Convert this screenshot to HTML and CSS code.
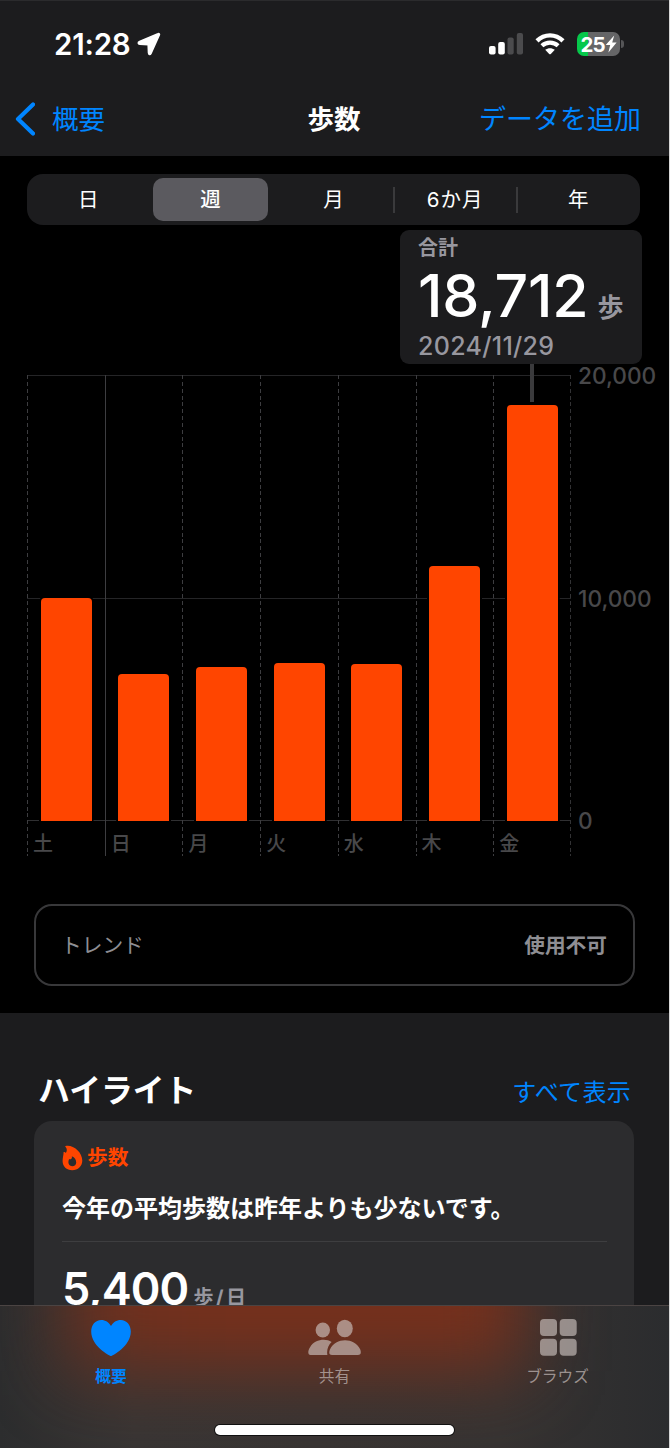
FILE: index.html
```
<!DOCTYPE html>
<html lang="ja">
<head>
    <meta charset="UTF-8">
    <title>歩数</title>
    <link rel="stylesheet" href="styles.css">
</head>
<body>
    <div class="phone">
        <header class="header">
            <div class="status-bar">
                <div class="status-left">
                    <span class="time">21:28</span>
                    <svg class="location" width="24" height="24" viewBox="0 0 24 24">
                        <path d="M21 1.8 2.6 9.6C.6 10.5 1 12.2 2.8 12.3L11.2 12.6 11.5 20.8C11.6 22.8 13.2 23 14 21.3L22.3 3C22.8 1.9 22 1.3 21 1.8Z" fill="#fff" stroke="#fff" stroke-width="1.6" stroke-linejoin="round"/>
                    </svg>
                </div>
                <div class="status-right">
                    <svg class="signal" width="35" height="22" viewBox="0 0 35 22">
                        <rect x="0" y="13" width="6.6" height="8.5" rx="2" fill="#fff"/>
                        <rect x="9.2" y="9" width="6.6" height="12.5" rx="2" fill="#fff"/>
                        <rect x="18.5" y="4.5" width="6.2" height="17" rx="2" fill="#4b4b4d"/>
                        <rect x="27.8" y="0" width="6.2" height="21.5" rx="2" fill="#4b4b4d"/>
                    </svg>
                    <svg class="wifi" width="30" height="22" viewBox="0 0 30 22">
                        <path d="M2 7.8C9.4.6 20.6.6 28 7.8" fill="none" stroke="#fff" stroke-width="4.4"/>
                        <path d="M6.9 12.8C11.5 8.6 18.5 8.6 23.1 12.8" fill="none" stroke="#fff" stroke-width="4.2"/>
                        <path d="M10.2 16.8C13 14.7 17 14.7 19.8 16.8L15.8 20.9Q15 21.7 14.2 20.9Z" fill="#fff"/>
                    </svg>
                    <div class="battery">
                        <span>25</span>
                        <svg width="12" height="18" viewBox="0 0 12 18">
                            <path d="M9.2.5.7 10H5.2L3.4 17.5 11.6 7.6H7.2Z" fill="#fff"/>
                        </svg>
                    </div>
                    <i class="battery-cap"></i>
                </div>
            </div>
            <nav class="nav">
                <a class="back">
                    <svg width="21" height="34" viewBox="0 0 21 34">
                        <path d="M19 2.5 4 17 19 31.5" fill="none" stroke="#0085ff" stroke-width="4.2" stroke-linecap="round" stroke-linejoin="round"/>
                    </svg>
                    <span>概要</span>
                </a>
                <h1>歩数</h1>
                <a class="add">データを追加</a>
            </nav>
        </header>

        <main class="chart-section">
            <div class="segments">
                <div class="segment">日</div>
                <div class="segment selected">週</div>
                <div class="segment">月</div>
                <div class="segment line half-year">6か月</div>
                <div class="segment line">年</div>
            </div>

            <div class="summary">
                <div class="summary-label">合計</div>
                <div class="summary-value"><b>18,712</b><span>歩</span></div>
                <div class="summary-date">2024/11/29</div>
            </div>

            <div class="chart">
                <div class="plot">
                    <div class="day"><div class="bar" style="height: 223.5px"></div><span>土</span></div>
                    <div class="day week-start"><div class="bar" style="height: 147px"></div><span>日</span></div>
                    <div class="day"><div class="bar" style="height: 154px"></div><span>月</span></div>
                    <div class="day"><div class="bar" style="height: 158.5px"></div><span>火</span></div>
                    <div class="day"><div class="bar" style="height: 157px"></div><span>水</span></div>
                    <div class="day"><div class="bar" style="height: 255.5px"></div><span>木</span></div>
                    <div class="day picked"><div class="bar" style="height: 416px"></div><span>金</span></div>
                </div>
                <div class="axis">
                    <span>20,000</span>
                    <span>10,000</span>
                    <span>0</span>
                </div>
            </div>

            <div class="trend">
                <span>トレンド</span>
                <b>使用不可</b>
            </div>
        </main>

        <section class="highlights">
            <div class="highlights-head">
                <h2>ハイライト</h2>
                <a>すべて表示</a>
            </div>
            <div class="card">
                <div class="card-type">
                    <svg width="21" height="26" viewBox="0 0 21 26">
                        <path fill-rule="evenodd" d="M3.6.9C10.5-.8 20.3 6.5 20.3 15.6 20.3 21.4 16 25.3 10.2 25.3 4.5 25.3.6 21.6.6 16.1.6 12.3 1.8 9.6 1.5 7.3 2.2 6.5 3.3 7 3.8 8 5.3 5.8 5.1 3.7 3.4 1.8 3 1.3 3.1 1 3.6.9ZM9.8 11.2C10.6 14.2 8 14.8 7.2 14 6.4 15.5 6.2 17 6.6 18.5 7.2 20.3 8.6 21.2 10.3 21.2 12.6 21.2 14.2 19.7 14.2 17.4 14.2 14.5 12.7 12.4 9.8 11.2Z" fill="#ff4500"/>
                    </svg>
                    <span>歩数</span>
                </div>
                <p>今年の平均歩数は昨年よりも少ないです。</p>
                <div class="average"><b>5,400</b><span>歩/日</span></div>
            </div>
        </section>

        <footer class="tab-bar">
            <div class="tabs">
                <div class="tab active">
                    <svg width="54" height="40" viewBox="0 0 54 40">
                        <path d="M27 38C25.5 38 7.2 28.2 7.2 13.5 7.2 7 11.4 2 17.2 2 21.5 2 24.9 4.3 27 8 29.1 4.3 32.5 2 36.8 2 42.6 2 46.8 7 46.8 13.5 46.8 28.2 28.5 38 27 38Z"/>
                    </svg>
                    <span>概要</span>
                </div>
                <div class="tab">
                    <svg width="54" height="40" viewBox="0 0 54 40">
                        <ellipse cx="14.8" cy="12" rx="7.2" ry="7.5"/>
                        <path d="M2.5 37C-.6 37-.2 32.5 2.2 29 6.3 21.6 17.4 20 23.6 23.9 20.4 27 18.4 31.5 19.4 37Z"/>
                        <ellipse cx="36.8" cy="10.5" rx="8" ry="8.7"/>
                        <path d="M24 37C20.8 37 20.8 34 22.2 31 27.5 19.3 46.5 19.3 52 31 53.4 34 53.2 37 50 37Z"/>
                    </svg>
                    <span>共有</span>
                </div>
                <div class="tab">
                    <svg width="54" height="40" viewBox="0 0 54 40">
                        <rect x="9" y="1" width="17" height="17" rx="4"/>
                        <rect x="28.7" y="1" width="17" height="17" rx="4"/>
                        <rect x="9" y="20.8" width="17" height="17" rx="4"/>
                        <rect x="28.7" y="20.8" width="17" height="17" rx="4"/>
                    </svg>
                    <span>ブラウズ</span>
                </div>
            </div>
            <div class="home-indicator"></div>
        </footer>
    </div>
</body>
</html>
```
FILE: styles.css
```
* {
    box-sizing: border-box;
}

body {
    margin: 0;
    background: #000;
    font-family: Inter, "Noto Sans CJK JP", sans-serif;
    color: #fff;
}

h1, h2, p {
    margin: 0;
}

svg {
    display: block;
    flex: none;
}

.phone {
    position: relative;
    width: 670px;
    height: 1448px;
    overflow: hidden;
    border-right: 1px solid #d8d8d8;
    background: #1c1c1e;
}

/* header */
.header {
    height: 156px;
    border-top: 1px solid #2b2b2d;
    background: #1c1c1e;
}

.status-bar {
    display: flex;
    justify-content: space-between;
    height: 80px;
    padding: 7px 45px 0 54px;
}

.status-left,
.status-right {
    display: flex;
    align-items: center;
    height: 72px;
}

.time {
    font-size: 29.5px;
    font-weight: 600;
    letter-spacing: -0.2px;
}

.location {
    margin-left: 6px;
}

.wifi {
    margin-left: 11px;
}

.battery {
    display: flex;
    align-items: center;
    justify-content: center;
    width: 43px;
    height: 24px;
    margin-left: 12px;
    border-radius: 7px;
    background: linear-gradient(to right, #06c84b 11px, #656567 11px);
    font-size: 20.5px;
    font-weight: 700;
    letter-spacing: -1px;
}

.battery-cap {
    width: 3px;
    height: 8px;
    margin-left: 1px;
    border-radius: 0 4px 4px 0;
    background: #555557;
}

.nav {
    display: grid;
    grid-template-columns: 1fr auto 1fr;
    align-items: center;
    height: 75px;
    padding: 0 28px 0 14px;
    font-size: 26.5px;
    line-height: 40px;
}

.nav a {
    color: #0085ff;
}

.nav h1 {
    margin-left: 13px;
    font-size: 26.5px;
    font-weight: 700;
}

.back {
    display: flex;
    align-items: center;
    gap: 17px;
}

.add {
    justify-self: end;
    padding-top: 2px;
    font-size: 27px;
}

/* chart */
.chart-section {
    height: 857px;
    padding-top: 18px;
    background: #000;
}

.segments {
    display: grid;
    grid-template-columns: repeat(5, 1fr);
    width: 613px;
    height: 51px;
    margin-left: 27px;
    padding: 4px 0;
    border-radius: 16px;
    background: #1c1c1e;
    font-size: 20.5px;
    line-height: 44px;
    text-align: center;
}

.segment.selected {
    height: 43px;
    margin: 0 4px 0 3px;
    border-radius: 10px;
    background: #5b5a5f;
    font-weight: 500;
}

.segment.line {
    margin-left: -1px;
    background: linear-gradient(#3a3a3c, #3a3a3c) no-repeat left center / 2px 26px;
}

.segment.half-year {
    margin-left: -2px;
    letter-spacing: 1px;
}

.summary {
    width: 242px;
    height: 134px;
    margin: 5px 0 0 400px;
    padding: 4px 18px;
    border-radius: 9px;
    background: #1c1c1e;
    color: #98979f;
    font-weight: 500;
}

.summary-label {
    font-size: 20px;
    font-weight: 700;
    line-height: 28px;
}

.summary-value {
    display: flex;
    align-items: baseline;
    height: 70px;
    line-height: 68px;
    white-space: nowrap;
}

.summary-value b {
    color: #fff;
    font-size: 59px;
    font-weight: 500;
    letter-spacing: -0.2px;
}

.summary-value span {
    margin-left: 9px;
    font-size: 26px;
    font-weight: 700;
}

.summary-date {
    font-size: 25px;
    letter-spacing: 0.3px;
    line-height: 28px;
}

.chart {
    display: flex;
    height: 481px;
    margin: 11px 0 0 27px;
}

.plot {
    display: grid;
    grid-template-columns: repeat(7, 1fr);
    width: 544px;
    background:
        repeating-linear-gradient(to bottom, #323234 0 4px, transparent 4px 6.85px) no-repeat right top / 1px 100%,
        linear-gradient(#252527, #252527) no-repeat 0 0 / 100% 1px,
        linear-gradient(#252527, #252527) no-repeat 0 223px / 100% 1px,
        linear-gradient(#303032, #303032) no-repeat 0 445px / 100% 1px;
}

.day {
    position: relative;
    display: flex;
    flex-direction: column;
    justify-content: flex-end;
    background: repeating-linear-gradient(to bottom, #3d3d40 0 4px, transparent 4px 6.85px) no-repeat left top / 1px 100%;
}

.day.week-start {
    background: linear-gradient(#3d3d40, #3d3d40) no-repeat left top / 1px 100%;
}

.bar {
    width: 51px;
    margin-left: 13.5px;
    border-radius: 4px 4px 0 0;
    background: #ff4500;
    box-shadow: 0 0 0 2px #000;
    clip-path: inset(-2px -2px 0 -2px);
}

.day span {
    height: 35px;
    padding-left: 6px;
    color: #48484a;
    font-size: 20px;
    font-weight: 500;
    line-height: 47px;
}

/* line from the summary box to the picked bar */
.day.picked::before {
    content: "";
    position: absolute;
    top: -11px;
    left: 37px;
    width: 4px;
    height: 38px;
    background: #3a3a3c;
}

.axis {
    display: flex;
    flex-direction: column;
    justify-content: space-between;
    height: 473px;
    margin: -13px 0 0 7px;
    color: #48484a;
    font-size: 22.7px;
    font-weight: 500;
    line-height: 28px;
}

.trend {
    display: flex;
    align-items: center;
    justify-content: space-between;
    width: 601px;
    height: 82px;
    margin: 48px 0 0 34px;
    padding: 0 26px 2px 25px;
    border: 2px solid #38383a;
    border-radius: 18px;
    color: #8e8e93;
    font-size: 20.7px;
}

.trend b {
    font-weight: 700;
}

/* highlights */
.highlights {
    padding: 52px 35px 0 34px;
}

.highlights-head {
    display: flex;
    align-items: center;
    justify-content: space-between;
    height: 56px;
    padding: 0 3px 11px 4px;
}

.highlights-head h2 {
    font-size: 31.8px;
    font-weight: 700;
}

.highlights-head a {
    padding-top: 6px;
    color: #0085ff;
    font-size: 24px;
    letter-spacing: 0.3px;
}

.card {
    height: 260px;
    padding: 19px 27px 0 28px;
    border-radius: 18px;
    background: #2c2c2e;
}

.card-type {
    display: flex;
    align-items: center;
    gap: 4px;
    height: 36px;
    color: #ff4500;
    font-size: 20.7px;
    font-weight: 700;
    line-height: 36px;
}

.card p {
    height: 66px;
    border-bottom: 1px solid #3e3e40;
    font-size: 24px;
    font-weight: 700;
    line-height: 65px;
}

.average {
    display: flex;
    align-items: baseline;
    height: 60px;
    margin-top: 17px;
    line-height: 60px;
}

.average b {
    font-size: 45px;
    font-weight: 600;
    letter-spacing: -0.9px;
}

.average span {
    margin-left: 5px;
    color: #98979f;
    font-size: 20px;
    font-weight: 700;
    letter-spacing: 2.4px;
}

/* tab bar lies over the scrolled card */
.tab-bar {
    position: absolute;
    left: 0;
    right: 0;
    bottom: 0;
    height: 143px;
    overflow: hidden;
    border-top: 1px solid #4b4443;
    background: linear-gradient(to right, #2c2d2e, #383534 20%, #363332 75%, #2b2c2e);
}

/* red glow behind the tabs */
.tab-bar::before {
    content: "";
    position: absolute;
    top: -130px;
    left: 65px;
    width: 460px;
    height: 195px;
    background: linear-gradient(to right, #69301f, #76301c 30%, #76301c);
    filter: blur(36px);
}

.tabs {
    position: relative;
    display: grid;
    grid-template-columns: repeat(3, 1fr);
    padding-top: 12px;
}

.tab {
    display: flex;
    flex-direction: column;
    align-items: center;
    color: rgba(200, 190, 188, 0.7);
    font-size: 15.7px;
    line-height: 38px;
}

.tab svg {
    fill: rgba(205, 195, 192, 0.64);
}

.tab.active {
    margin-left: -1px;
    color: #0085ff;
    font-weight: 700;
}

.tab.active svg {
    fill: #0085ff;
}

.home-indicator {
    position: relative;
    width: 239px;
    height: 10px;
    margin: 29px auto 0;
    border-radius: 5px;
    background: #fff;
    box-shadow: 0 0 0 1px #111;
}
```
